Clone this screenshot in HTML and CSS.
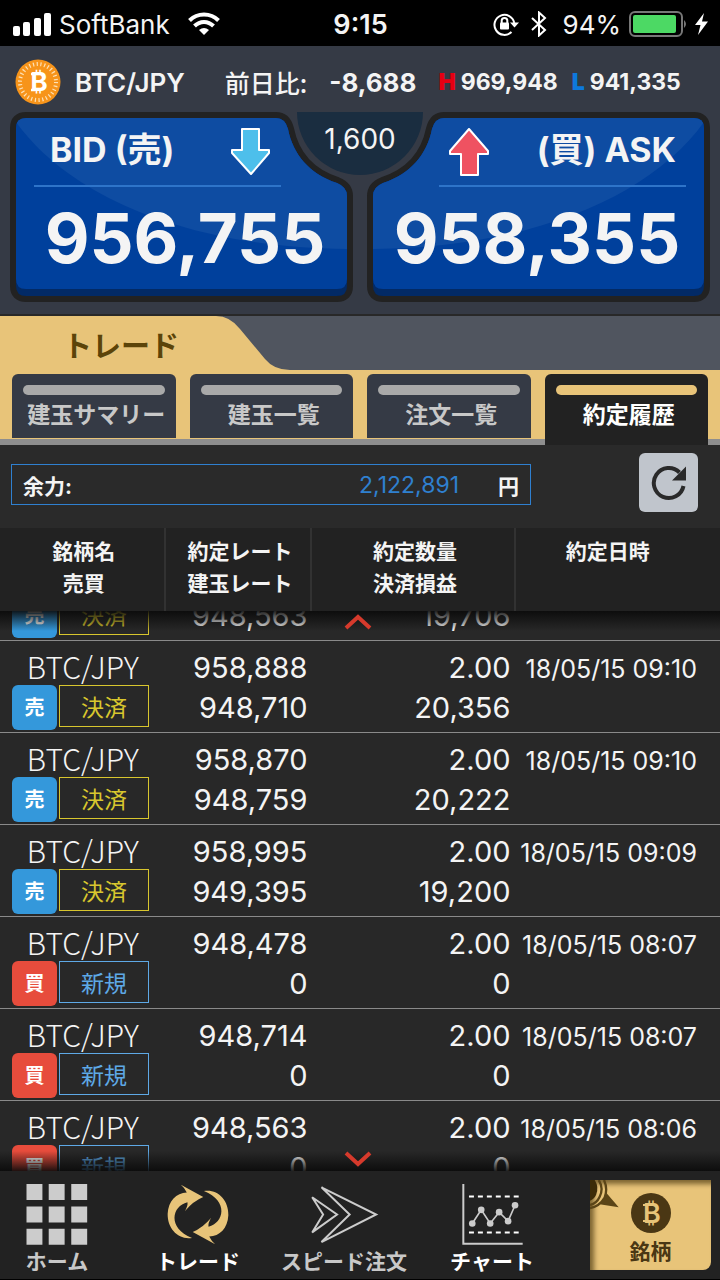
FILE: index.html
```html
<!DOCTYPE html>
<html lang="ja">
<head>
    <meta charset="UTF-8">
    <meta name="viewport" content="width=device-width, initial-scale=1.0">
    <title>トレード - 約定履歴</title>
    <link rel="stylesheet" href="styles.css">
</head>
<body>
    <!-- Status bar -->
    <div class="status">
        <div class="status-left">
            <svg width="38" height="24" viewBox="0 0 38 24" fill="white">
                <rect x="0" y="14" width="7" height="10" rx="2"/>
                <rect x="10" y="10" width="7" height="14" rx="2"/>
                <rect x="21" y="6" width="7" height="18" rx="2"/>
                <rect x="31" y="1" width="7" height="23" rx="2"/>
            </svg>
            <span>SoftBank</span>
            <svg class="wifi" width="32" height="24" viewBox="0 0 32 24" fill="none" stroke="white" stroke-width="4">
                <path d="M1.5 8.5 C9.500 .5 22.500 .5 30.500 8.500"/>
                <path d="M6.500 14 C12 8.500 20 8.500 25.500 14"/>
                <path d="M11 18 Q16 14 21 18 L16 23Z" fill="white" stroke="none"/>
            </svg>
        </div>
        <time class="clock">9:15</time>
        <div class="status-right">
            <svg width="26" height="24" viewBox="0 0 26 24" fill="none" stroke="white" stroke-width="2">
                <path d="M18.500 20 A10 10 0 1 1 21.300 11"/>
                <path d="M17 10.500 H26 L21.500 15.500Z" fill="white" stroke="none"/>
                <rect x="7" y="10.500" width="9" height="7" rx="1" fill="white" stroke="none"/>
                <path d="M8.700 11 V8.500 Q8.700 6 11.500 6 Q14.300 6 14.300 8.500 V11"/>
            </svg>
            <svg class="bluetooth" width="16" height="26" viewBox="0 0 16 26" fill="none" stroke="white" stroke-width="2">
                <path d="M1 7 L14 19 L8 24.500 V1.500 L14 7 L1 19"/>
            </svg>
            <span>94%</span>
            <svg width="58" height="26" viewBox="0 0 58 26">
                <rect x="1" y="1" width="52" height="24" rx="5" fill="none" stroke="#777" stroke-width="2"/>
                <rect x="4" y="4" width="43" height="18" rx="2" fill="#4cd964"/>
                <path d="M55 9 Q59 13 55 17Z" fill="#777"/>
            </svg>
            <svg width="13" height="22" viewBox="0 0 13 22" fill="white">
                <path d="M9 0 L0 12 H5.500 L3 22 L13 8.500 H7Z"/>
            </svg>
        </div>
    </div>

    <header class="quote">
        <div class="quote-line">
            <svg class="coin" width="46" height="46" viewBox="0 0 46 46">
                <circle cx="23" cy="23" r="22.500" fill="#f7941a"/>
                <circle cx="23" cy="23" r="18" fill="none" stroke="#fde0b5" stroke-width="4" stroke-dasharray="1.200 2.569"/>
                <text x="24" y="32" class="coin-sign">₿</text>
                <path d="M16 15 H20 M16 31 H20" stroke="white" stroke-width="2.500"/>
            </svg>
            <strong class="pair">BTC/JPY</strong>
            <span class="diff">前日比:</span>
            <strong class="diff-value">-8,688</strong>
            <span class="range high"><b>H</b>969,948</span>
            <span class="range low"><b>L</b>941,335</span>
        </div>

        <div class="prices">
            <button class="price bid" type="button">
                <svg class="price-shape" viewBox="0 0 344 190" preserveAspectRatio="none">
                    <defs>
                        <clipPath id="face">
                            <path d="M17 6 H267 Q276 6 279 17 C284 42 300 62 328 71 Q338 75 338 84 V167 Q338 177 328 177 H17 Q7 177 7 167 V16 Q7 6 17 6Z"/>
                        </clipPath>
                    </defs>
                    <path d="M17 6 H267 Q276 6 279 17 C284 42 300 62 328 71 Q338 75 338 84 V174 Q338 184 328 184 H17 Q7 184 7 174 V16 Q7 6 17 6Z" fill="#022a66" stroke="#222" stroke-width="12" paint-order="stroke"/>
                    <g clip-path="url(#face)">
                        <rect width="344" height="190" fill="#00409c"/>
                        <path d="M7 10 C60 84 180 137 344 137 V0 H7Z" fill="#0e4ca2"/>
                    </g>
                </svg>
                <span class="price-head">
                    <span>BID (売)</span>
                    <svg width="40" height="48" viewBox="0 0 40 48"><path d="M11 1 H28 V22 H38 V25 L20 46 L1 25 V22 H11Z" fill="#4dbfeb" stroke="white" stroke-width="2" stroke-linejoin="round"/></svg>
                </span>
                <span class="price-value">956,755</span>
            </button>
            <button class="price ask" type="button">
                <svg class="price-shape" viewBox="0 0 344 190" preserveAspectRatio="none">
                    <path d="M17 6 H267 Q276 6 279 17 C284 42 300 62 328 71 Q338 75 338 84 V174 Q338 184 328 184 H17 Q7 184 7 174 V16 Q7 6 17 6Z" fill="#022a66" stroke="#222" stroke-width="12" paint-order="stroke"/>
                    <g clip-path="url(#face)">
                        <rect width="344" height="190" fill="#00409c"/>
                        <path d="M7 10 C60 84 180 137 344 137 V0 H7Z" fill="#0e4ca2"/>
                    </g>
                </svg>
                <span class="price-head">
                    <svg width="40" height="48" viewBox="0 0 40 48"><path d="M12 47 H29 V26 H39 V23 L20 1 L1 23 V26 H12Z" fill="#ef5261" stroke="white" stroke-width="2" stroke-linejoin="round"/></svg>
                    <span>(買) ASK</span>
                </span>
                <span class="price-value">958,355</span>
            </button>
            <div class="spread">1,600</div>
        </div>
    </header>

    <section class="title-bar">
        <svg class="title-shape" width="290" height="55" viewBox="0 0 290 55">
            <path d="M0 0 H216 Q230 0 240 13 L265 43 Q274 54 290 54 V55 H0Z" fill="#e8c479"/>
        </svg>
        <h1>トレード</h1>
    </section>

    <nav class="tabs">
        <a class="tab" href="#summary">建玉サマリー</a>
        <a class="tab" href="#positions">建玉一覧</a>
        <a class="tab" href="#orders">注文一覧</a>
        <a class="tab active" href="#history">約定履歴</a>
    </nav>

    <div class="balance">
        <div class="balance-box">
            <span>余力:</span>
            <span class="balance-value">2,122,891</span>
            <span>円</span>
        </div>
        <button class="reload" type="button" aria-label="更新">
            <svg width="36" height="36" viewBox="0 0 36 36">
                <path d="M32.500 21 A15 15 0 1 1 28.500 7.500" fill="none" stroke="#2a2a2a" stroke-width="4"/>
                <path d="M35 1.500 V15.500 H21Z" fill="#2a2a2a"/>
            </svg>
        </button>
    </div>

    <main class="history">
        <div class="scroller">
            <table>
                <thead>
                    <tr>
                        <th class="col-pair">銘柄名<br>売買</th>
                        <th class="col-rate">約定レート<br>建玉レート</th>
                        <th class="col-amount">約定数量<br>決済損益</th>
                        <th class="col-date">約定日時</th>
                    </tr>
                </thead>
                <tbody>
                    <tr>
                        <td class="name">BTC/JPY<div class="marks"><b class="side sell">売</b><span class="kind close">決済</span></div></td>
                        <td>958,416<br>948,563</td>
                        <td>2.00<br>19,706</td>
                        <td class="date">18/05/15 09:10</td>
                    </tr>
                    <tr>
                        <td class="name">BTC/JPY<div class="marks"><b class="side sell">売</b><span class="kind close">決済</span></div></td>
                        <td>958,888<br>948,710</td>
                        <td>2.00<br>20,356</td>
                        <td class="date">18/05/15 09:10</td>
                    </tr>
                    <tr>
                        <td class="name">BTC/JPY<div class="marks"><b class="side sell">売</b><span class="kind close">決済</span></div></td>
                        <td>958,870<br>948,759</td>
                        <td>2.00<br>20,222</td>
                        <td class="date">18/05/15 09:10</td>
                    </tr>
                    <tr>
                        <td class="name">BTC/JPY<div class="marks"><b class="side sell">売</b><span class="kind close">決済</span></div></td>
                        <td>958,995<br>949,395</td>
                        <td>2.00<br>19,200</td>
                        <td class="date">18/05/15 09:09</td>
                    </tr>
                    <tr>
                        <td class="name">BTC/JPY<div class="marks"><b class="side buy">買</b><span class="kind open">新規</span></div></td>
                        <td>948,478<br>0</td>
                        <td>2.00<br>0</td>
                        <td class="date">18/05/15 08:07</td>
                    </tr>
                    <tr>
                        <td class="name">BTC/JPY<div class="marks"><b class="side buy">買</b><span class="kind open">新規</span></div></td>
                        <td>948,714<br>0</td>
                        <td>2.00<br>0</td>
                        <td class="date">18/05/15 08:07</td>
                    </tr>
                    <tr>
                        <td class="name">BTC/JPY<div class="marks"><b class="side buy">買</b><span class="kind open">新規</span></div></td>
                        <td>948,563<br>0</td>
                        <td>2.00<br>0</td>
                        <td class="date">18/05/15 08:06</td>
                    </tr>
                </tbody>
            </table>
        </div>
        <!-- Scroll hints over the list -->
        <div class="hint hint-up">
            <svg width="28" height="16" viewBox="0 0 28 16"><path d="M2 14 L14 3 L26 14" fill="none" stroke="#d63a2c" stroke-width="4"/></svg>
        </div>
        <div class="hint hint-down">
            <svg width="28" height="16" viewBox="0 0 28 16"><path d="M2 2 L14 13 L26 2" fill="none" stroke="#d63a2c" stroke-width="4"/></svg>
        </div>
    </main>

    <nav class="bottom">
        <a href="#home">
            <svg width="62" height="61" viewBox="80 252 186 184" fill="#ccc">
                <path d="M81 252h48v48h-48z M148 252h48v48h-48z M216 252h48v48h-48z"/>
                <path d="M81 320h48v48h-48z M148 320h48v48h-48z M216 320h48v48h-48z"/>
                <path d="M81 387h48v48h-48z M148 387h48v48h-48z M216 387h48v48h-48z"/>
            </svg>
            ホーム
        </a>
        <a class="current" href="#trade">
            <svg width="62" height="61" viewBox="500 252 188 184" fill="#e8c479">
                <path id="swirl" d="M542 254 L610 291 Q580 303 554 334 Q564 318 562 307 C515 318 500 385 576 415 C535 422 501 388 502 342 C504 302 528 279 560 277 Q554 264 542 254Z"/>
                <use href="#swirl" transform="rotate(180 594 344)"/>
            </svg>
            トレード
        </a>
        <a href="#speed">
            <svg width="70" height="61" viewBox="928 252 210 184" fill="none" stroke="#ccc" stroke-width="6">
                <path d="M965 262 L1130 344 L965 427 L1050 344Z"/>
                <path d="M937 292 L1012 344 L937 398 L970 344Z"/>
            </svg>
            スピード注文
        </a>
        <a class="current" href="#chart">
            <svg width="63" height="61" viewBox="300 252 190 184" fill="none" stroke="#ccc">
                <path d="M307 252 V432 H486" stroke-width="6"/>
                <path d="M324 290 H474 M324 398 H474" stroke="white" stroke-width="6" stroke-dasharray="15 12"/>
                <path d="M334 371 L361 330 L388 371 L415 337 L442 364 L463 316" stroke-width="5"/>
                <g fill="#ccc" stroke="none">
                    <circle cx="334" cy="371" r="10"/>
                    <circle cx="361" cy="330" r="10"/>
                    <circle cx="388" cy="371" r="10"/>
                    <circle cx="415" cy="337" r="10"/>
                    <circle cx="442" cy="364" r="10"/>
                    <circle cx="463" cy="316" r="10"/>
                </g>
            </svg>
            チャート
        </a>
        <a class="symbol" href="#symbol">
            <svg class="corner" width="30" height="30" viewBox="0 0 90 90">
                <path d="M0 0 H14 Q28 22 18 45 Q12 58 0 62Z" fill="#3d2c08"/>
                <path d="M26 0 Q42 24 29 50 Q20 70 0 75 M42 0 Q54 26 44 53 Q28 80 0 84" fill="none" stroke="#5b4517" stroke-width="7"/>
                <path d="M50 40 L86 82 L24 72 Q44 60 50 40Z" fill="#5b4517"/>
            </svg>
            <svg width="40" height="40" viewBox="0 0 40 40">
                <circle cx="20" cy="20" r="20" fill="#4a3714"/>
                <text x="21" y="30" class="symbol-sign">₿</text>
                <path d="M12 12 H17 M12 28 H17" stroke="#e8c479" stroke-width="2"/>
            </svg>
            銘柄
        </a>
    </nav>

    <script>
        // Start the list part-way through the first row
        document.querySelector('.scroller').scrollTop = 62;
    </script>
</body>
</html>
```
FILE: styles.css
```css
* {
    box-sizing: border-box;
}

body {
    display: flex;
    flex-direction: column;
    height: 100vh;
    margin: 0;
    background: #282828;
    color: #f4f4f4;
    font-family: Inter, "Noto Sans CJK JP", sans-serif;
    overflow: hidden;
}

a {
    color: inherit;
    text-decoration: none;
}

button {
    padding: 0;
    border: 0;
    color: inherit;
    font-family: inherit;
}

svg {
    flex: none;
}

/* Status bar */
.status {
    display: grid;
    grid-template-columns: 1fr auto 1fr;
    align-items: center;
    height: 46px;
    padding: 2px 12px 0 13px;
    background: black;
    font-size: 26px;
}

.status-left,
.status-right {
    display: flex;
    align-items: center;
    gap: 8px;
}

.status-right {
    justify-content: flex-end;
}

.wifi {
    margin-left: 10px;
}

.bluetooth {
    margin: 0 8px 0 4px;
}

.clock {
    font-size: 27px;
    font-weight: 600;
}

/* Quote header */
.quote {
    padding: 13px 9px 12px;
    border-bottom: 2px solid #282828;
    background: #353a45;
}

.quote-line {
    display: flex;
    align-items: center;
    height: 46px;
    padding-left: 6px;
    font-size: 26px;
    white-space: nowrap;
}

.coin-sign {
    fill: white;
    font-size: 26px;
    font-weight: 700;
    text-anchor: middle;
}

.pair {
    margin: 0 40px 0 14px;
    font-weight: 600;
}

.diff {
    font-family: "Noto Sans CJK JP", sans-serif;
    font-size: 25px;
    font-weight: 500;
}

.diff-value {
    margin: 0 22px;
    font-weight: 700;
}

.range {
    margin-right: 14px;
    font-size: 23px;
    font-weight: 700;
}

.range b {
    margin-right: 5px;
}

.high b {
    color: #e60012;
}

.low b {
    color: #0d78dc;
}

.prices {
    position: relative;
    display: grid;
    grid-template-columns: 1fr 1fr;
    gap: 14px;
    margin-top: 7px;
}

.price {
    position: relative;
    display: flex;
    flex-direction: column;
    height: 190px;
    padding: 7px 6px 0;
    background: none;
}

.price-shape {
    position: absolute;
    inset: 0;
    width: 100%;
    height: 100%;
    overflow: visible;
}

.ask .price-shape {
    transform: scaleX(-1);
}

.price-head {
    position: relative;
    display: flex;
    align-items: center;
    justify-content: space-between;
    height: 68px;
    padding: 0 10px 0 16px;
    border-bottom: 2px solid #2e74c9;
    font-size: 34px;
    font-weight: 700;
    line-height: 36px;
}

.price-head span {
    padding-bottom: 4px;
}

.bid .price-head {
    margin: 0 66px 0 19px;
}

.ask .price-head {
    margin: 0 19px 0 66px;
    padding: 0 10px;
}

.price-value {
    position: relative;
    font-size: 69px;
    font-weight: 700;
    line-height: 102px;
    text-align: center;
}

.bid .price-value {
    padding-left: 8px;
}

.ask .price-value {
    padding-right: 4px;
}

.spread {
    position: absolute;
    top: 0;
    left: 50%;
    width: 126px;
    height: 63px;
    margin-left: -63px;
    border-radius: 0 0 63px 63px;
    background: #1a2d40;
    font-size: 28px;
    line-height: 54px;
    text-align: center;
}

/* Title and tabs */
.title-bar {
    position: relative;
    height: 54px;
    background: #50555f;
}

.title-shape {
    position: absolute;
    top: 0;
    left: 0;
}

.title-bar h1 {
    position: relative;
    margin: 0;
    padding-left: 63px;
    color: #5c4409;
    font-size: 29px;
    font-weight: 700;
    line-height: 62px;
}

.tabs {
    display: grid;
    grid-template-columns: repeat(4, 1fr);
    gap: 14px;
    height: 75px;
    padding: 4px 12px 0;
    border-bottom: 6px solid #8e8e8e;
    background: #e8c479;
}

.tab {
    height: 64px;
    padding-left: 5px;
    border-radius: 6px 6px 0 0;
    background: #353a45;
    color: #c8c8c8;
    font-size: 23px;
    font-weight: 700;
    line-height: 40px;
    text-align: center;
    white-space: nowrap;
}

.tab::before {
    content: "";
    display: block;
    height: 10px;
    margin: 11px 11px 0 6px;
    border-radius: 5px;
    background: #a9a9a9;
}

.tab.active {
    height: 71px;
    background: #222;
    color: white;
}

.tab.active::before {
    background: #e8c479;
}

/* Balance */
.balance {
    display: flex;
    align-items: center;
    justify-content: space-between;
    height: 83px;
    padding: 0 22px 8px 11px;
    background: #2a2a2a;
}

.balance-box {
    display: flex;
    align-items: center;
    width: 520px;
    height: 41px;
    margin-top: 4px;
    padding: 0 11px;
    border: 1px solid #2f80d0;
    font-size: 21px;
    font-weight: 700;
}

.balance-value {
    margin: 0 39px 0 auto;
    color: #2f80d0;
    font-size: 23px;
    font-weight: 400;
}

.reload {
    display: flex;
    align-items: center;
    justify-content: center;
    width: 59px;
    height: 59px;
    border-radius: 6px;
    background: #c0c5cc;
}

/* History list */
.history {
    position: relative;
    flex: 1;
    min-height: 0;
}

.scroller {
    height: 100%;
    overflow-y: auto;
    scrollbar-width: none;
}

table {
    width: 100%;
    border-spacing: 0;
    table-layout: fixed;
}

th {
    position: sticky;
    top: 0;
    z-index: 1;
    height: 83px;
    padding: 8px 0 0 4px;
    border-right: 2px solid #323232;
    background: #222;
    font-size: 21px;
    font-weight: 700;
    line-height: 32px;
    vertical-align: top;
}

.col-pair {
    width: 23%;
}

.col-rate {
    width: 20.4%;
}

.col-amount {
    width: 28.2%;
}

.col-date {
    padding-right: 24px;
    border-right: 0;
}

td {
    height: 92px;
    padding: 7px 5px 0 0;
    border-bottom: 1px solid #8a8a8a;
    font-size: 29px;
    line-height: 40px;
    text-align: right;
    vertical-align: top;
    white-space: nowrap;
}

.name {
    padding-right: 0;
    font-family: "Noto Sans CJK JP", sans-serif;
    font-size: 30px;
    font-weight: 300;
    line-height: 37px;
    text-align: center;
}

.marks {
    display: flex;
    gap: 2px;
    padding-left: 12px;
}

.side {
    width: 45px;
    height: 45px;
    border-radius: 6px;
    color: white;
    font-size: 20px;
    font-weight: 700;
    line-height: 44px;
}

.sell {
    background: #3498db;
}

.buy {
    background: #e74c3c;
}

.kind {
    width: 90px;
    height: 42px;
    border: 1px solid;
    font-size: 23px;
    font-weight: 400;
    line-height: 40px;
}

.close {
    color: #d8c62e;
}

.open {
    color: #5ea9e6;
}

.date {
    padding-right: 23px;
    font-size: 25px;
    line-height: 42px;
}

.hint {
    position: absolute;
    right: 0;
    left: 0;
    display: flex;
    justify-content: center;
    height: 20px;
    padding-right: 4px;
    pointer-events: none;
}

.hint-up {
    top: 83px;
    padding-top: 3px;
    background: linear-gradient(rgba(10, 10, 10, 0.9), rgba(10, 10, 10, 0));
}

.hint-down {
    bottom: 0;
    background: linear-gradient(rgba(10, 10, 10, 0), rgba(10, 10, 10, 0.9));
}

/* Bottom navigation */
.bottom {
    display: grid;
    grid-template-columns: minmax(0, 114fr) minmax(0, 168fr) minmax(0, 124fr) minmax(0, 172fr) minmax(0, 142fr);
    height: 109px;
    padding-top: 13px;
    border-bottom: 1px solid black;
    background: #222;
    color: #c8c8c8;
    font-size: 21px;
    font-weight: 700;
    line-height: 34px;
    white-space: nowrap;
}

.bottom a {
    display: flex;
    flex-direction: column;
    align-items: center;
}

.bottom .current {
    color: white;
}

.bottom .symbol {
    position: relative;
    height: 90px;
    margin: -4px 9px 0 12px;
    padding-top: 13px;
    border-radius: 0 0 8px 0;
    background: #e8c479;
    box-shadow: inset 4px 4px 5px rgba(50, 35, 0, 0.6);
    color: #4a3714;
    line-height: 38px;
}

.corner {
    position: absolute;
    top: 0;
    left: 0;
}

.symbol-sign {
    fill: #e8c479;
    font-size: 27px;
    font-weight: 600;
    text-anchor: middle;
}
```
